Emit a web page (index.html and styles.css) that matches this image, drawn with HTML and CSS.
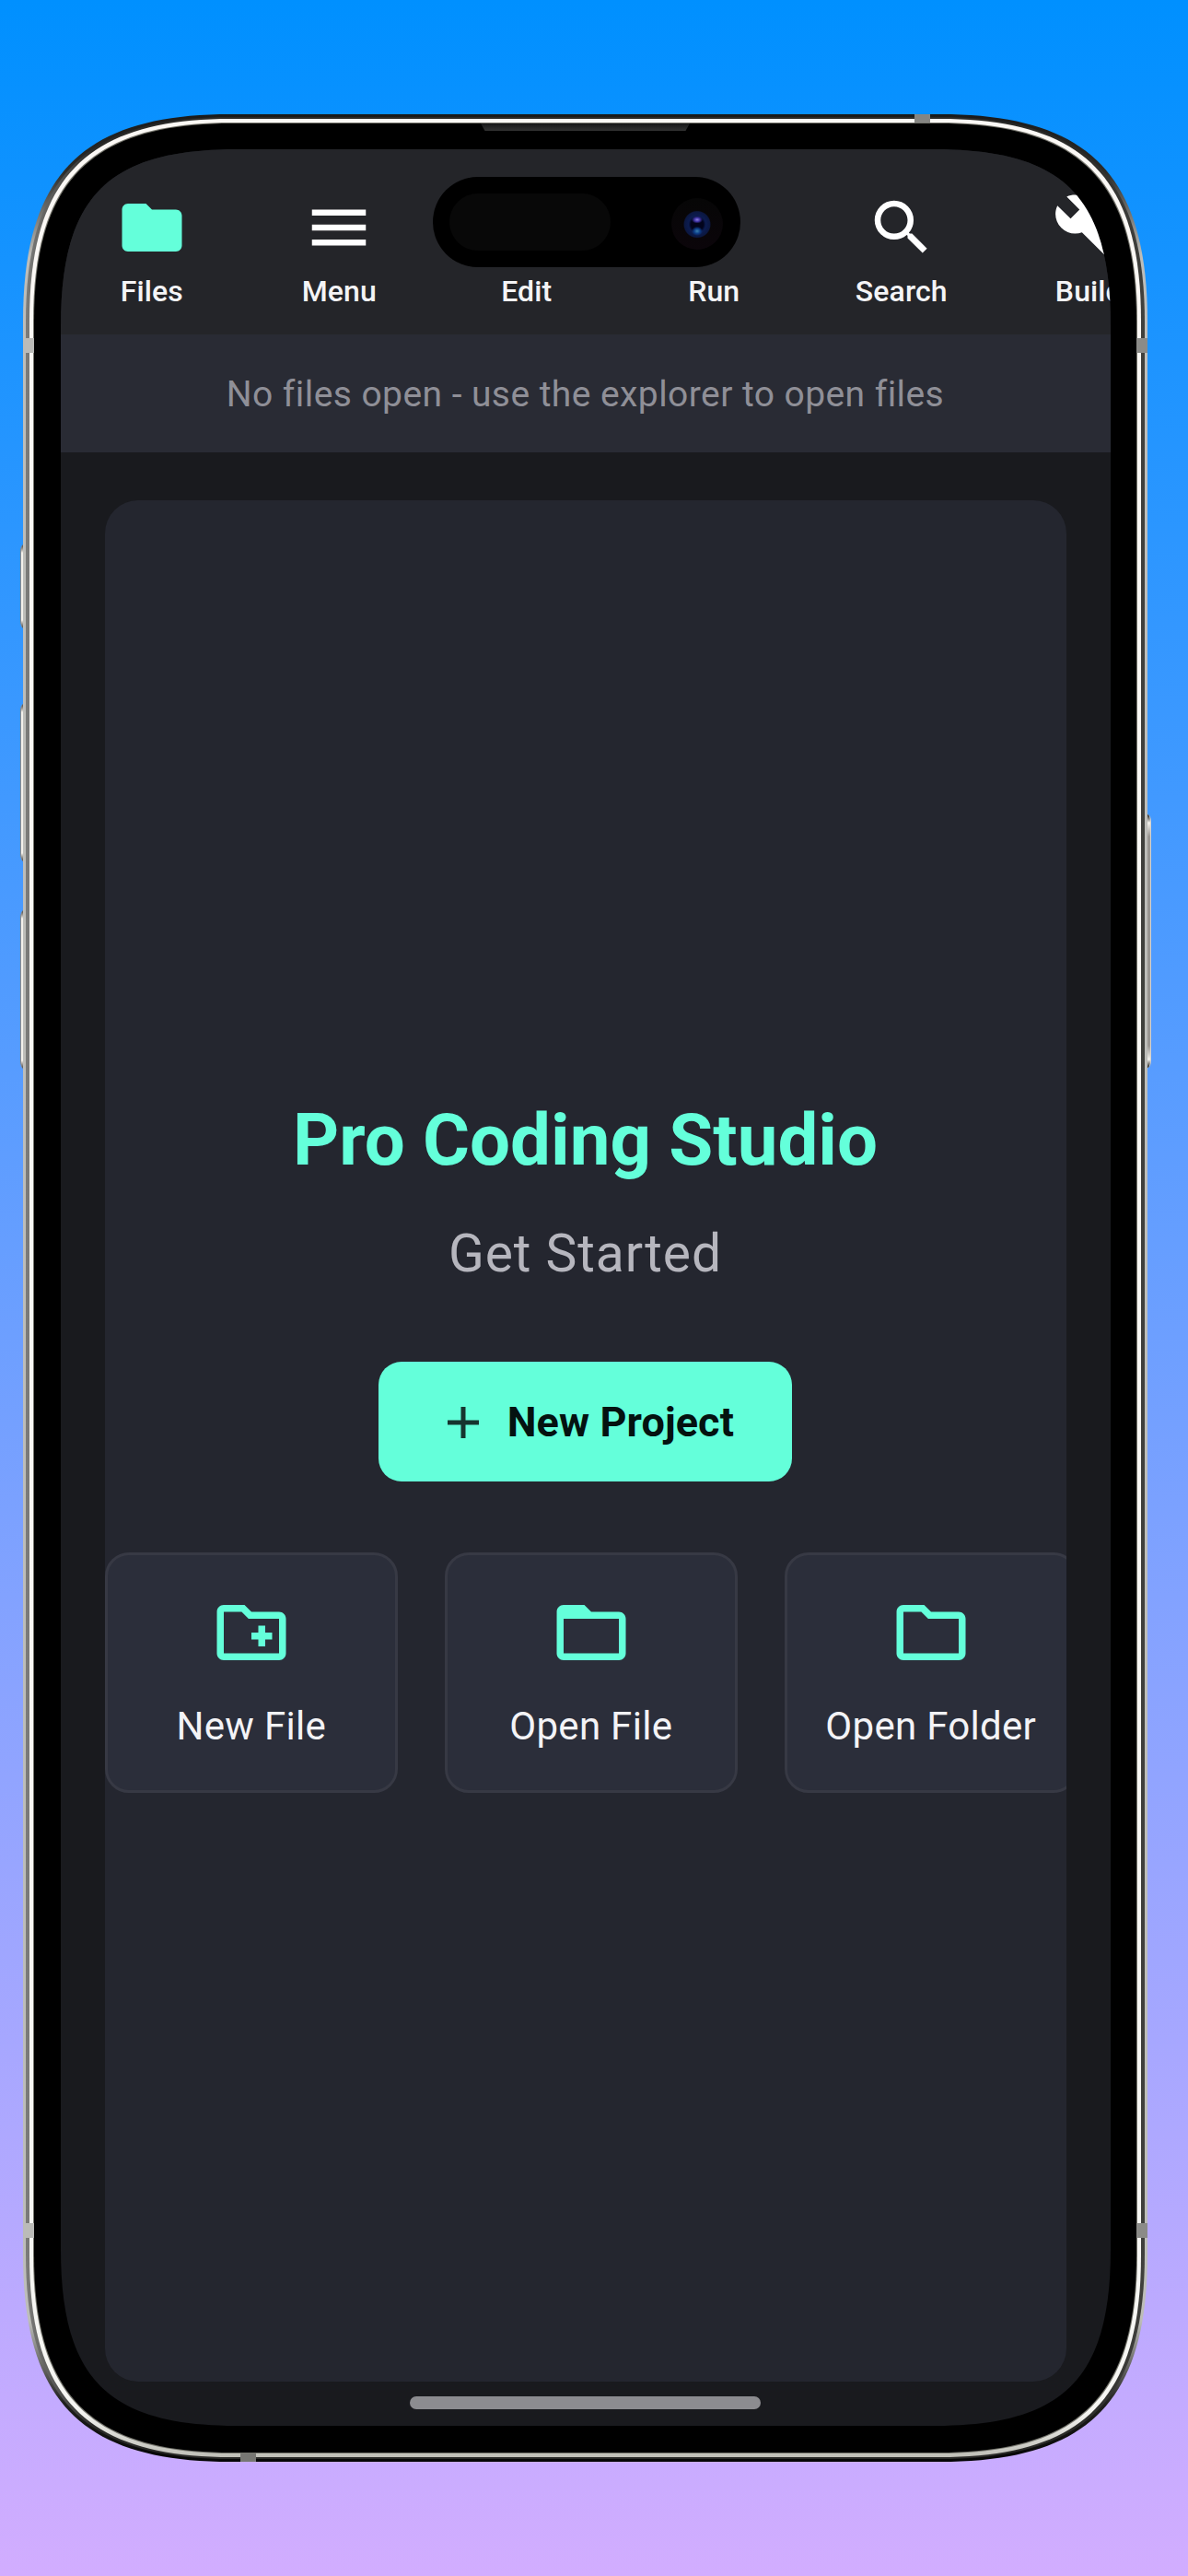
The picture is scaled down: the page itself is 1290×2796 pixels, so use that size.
FILE: index.html
```html
<!DOCTYPE html>
<html lang="en">
<head>
<meta charset="utf-8">
<title>Pro Coding Studio</title>
<link rel="stylesheet" href="styles.css">
</head>
<body>
<div class="phone">
  <span class="key key-action"></span>
  <span class="key key-up"></span>
  <span class="key key-down"></span>
  <span class="key key-power"></span>
  <svg class="frame" viewBox="0 0 1221 2548">
    <defs>
      <linearGradient id="steel" x1="0" y1="0" x2="0" y2="1">
        <stop offset="0" stop-color="#1a1a1a"/><stop offset=".025" stop-color="#2c2c2a"/><stop offset=".06" stop-color="#bdbdb9"/>
        <stop offset=".94" stop-color="#bdbdb9"/><stop offset=".975" stop-color="#20201e"/><stop offset="1" stop-color="#050505"/>
      </linearGradient>
      <linearGradient id="groove" x1="0" y1="0" x2="1" y2="0">
        <stop offset="0" stop-color="#7c7c7a"/><stop offset=".06" stop-color="#2a2a28"/>
        <stop offset=".94" stop-color="#2a2a28"/><stop offset="1" stop-color="#40403d"/>
      </linearGradient>
      <linearGradient id="shine" x1="0" y1="0" x2="0" y2="1">
        <stop offset="0" stop-color="#fbf8f5"/><stop offset=".98" stop-color="#f6f6f3"/><stop offset="1" stop-color="#bfbfb7"/>
      </linearGradient>
    </defs>
    <path fill="url(#steel)" d="M225 0H996C1156 0 1221 65 1221 225V2323C1221 2483 1156 2548 996 2548H225C65 2548 0 2483 0 2323V225C0 65 65 0 225 0Z"/>
    <path fill="url(#groove)" d="M226 3H995C1154 3 1218 67 1218 226V2322C1218 2481 1154 2545 995 2545H226C67 2545 3 2481 3 2322V226C3 67 67 3 226 3Z"/>
    <path fill="url(#shine)" d="M226 5H995C1151 5 1214 68 1214 224V2324C1214 2480 1151 2543 995 2543H226C70 2543 7 2480 7 2324V224C7 68 70 5 226 5Z"/>
    <path fill="#77776f" d="M227 9H994C1148 9 1210 71 1210 225V2323C1210 2477 1148 2539 994 2539H227C73 2539 11 2477 11 2323V225C11 71 73 9 227 9Z"/>
    <path d="M227 10H994C1147 10 1209 72 1209 225V2323C1209 2476 1147 2538 994 2538H227C74 2538 12 2476 12 2323V225C12 72 74 10 227 10Z"/>
  </svg>
  <main class="screen">
    <nav class="toolbar">
      <div class="tool tool-active"><svg class="tool-icon" viewBox="0 0 24 24"><path d="M10 4H4c-1.100 0-2 .9-2 2v12c0 1.100.9 2 2 2h16c1.100 0 2-.9 2-2V8c0-1.100-.9-2-2-2h-8l-2-2z"/></svg><span>Files</span></div>
      <div class="tool"><svg class="tool-icon" viewBox="0 0 24 24"><path d="M3 18h18v-2H3v2zm0-5h18v-2H3v2zm0-7v2h18V6H3z"/></svg><span>Menu</span></div>
      <div class="tool"><svg class="tool-icon" viewBox="0 0 24 24"><path d="M3 17.250V21h3.750L17.810 9.940l-3.750-3.750L3 17.250zM20.710 7.040a1 1 0 0 0 0-1.410l-2.340-2.340a1 1 0 0 0-1.410 0l-1.830 1.830 3.750 3.750 1.830-1.830z"/></svg><span>Edit</span></div>
      <div class="tool"><svg class="tool-icon" viewBox="0 0 24 24"><path d="M8 5v14l11-7z"/></svg><span>Run</span></div>
      <div class="tool"><svg class="tool-icon" viewBox="0 0 24 24"><path d="M15.500 14h-.79l-.28-.27A6.471 6.471 0 0 0 16 9.500 6.500 6.500 0 1 0 9.500 16c1.610 0 3.090-.59 4.230-1.570l.27.28v.79l5 4.990L20.490 19l-4.990-5zm-6 0C7.010 14 5 11.990 5 9.500S7.010 5 9.500 5 14 7.010 14 9.500 11.990 14 9.500 14z"/></svg><span>Search</span></div>
      <div class="tool"><svg class="tool-icon" viewBox="0 0 24 24"><path d="M22.700 19l-9.100-9.100c.9-2.300.4-5-1.500-6.900-2-2-5-2.400-7.400-1.300L9 6 6 9 1.600 4.700C.4 7.100.9 10.100 2.900 12.100c1.900 1.900 4.600 2.400 6.900 1.500l9.100 9.100c.4.4 1 .4 1.400 0l2.300-2.300c.5-.4.5-1.100.1-1.400z"/></svg><span>Build</span></div>
    </nav>
    <div class="tabs">No files open - use the explorer to open files</div>
    <section class="panel">
      <h1 class="title">Pro Coding Studio</h1>
      <p class="subtitle">Get Started</p>
      <button class="primary"><svg class="plus" viewBox="0 0 34 34"><path d="M17 0v34M0 17h34"/></svg><span>New Project</span></button>
      <div class="cards">
        <div class="card"><svg class="card-icon" viewBox="0 0 24 24"><path d="M20 6h-8l-2-2H4c-1.110 0-1.990.89-1.990 2L2 18c0 1.110.89 2 2 2h16c1.110 0 2-.89 2-2V8c0-1.110-.89-2-2-2zm0 12H4V6h5.170l2 2H20v10zm-8-4h2v2h2v-2h2v-2h-2v-2h-2v2h-2v2z"/></svg><span>New File</span></div>
        <div class="card"><svg class="card-icon" viewBox="0 0 24 24"><path d="M20 6h-8l-2-2H4c-1.100 0-1.990.9-1.990 2L2 18c0 1.100.9 2 2 2h16c1.100 0 2-.9 2-2V8c0-1.100-.9-2-2-2zm0 12H4V8h16v10z"/></svg><span>Open File</span></div>
        <div class="card"><svg class="card-icon" viewBox="0 0 24 24"><path d="M9.170 6l2 2H20v10H4V6h5.170M10 4H4c-1.100 0-1.990.9-1.990 2L2 18c0 1.100.9 2 2 2h16c1.100 0 2-.9 2-2V8c0-1.100-.9-2-2-2h-8l-2-2z"/></svg><span>Open Folder</span></div>
      </div>
    </section>
    <div class="home-bar"></div>
  </main>
  <span class="speaker"></span>
  <div class="island"><span class="sensor"></span><span class="camera"></span></div>
  <span class="band band-left band-high"></span>
  <span class="band band-left band-low"></span>
  <span class="band band-right band-high"></span>
  <span class="band band-right band-low"></span>
  <span class="band band-top"></span>
  <span class="band band-bottom"></span>
</div>
</body>
</html>
```
FILE: styles.css
```css
* { box-sizing: border-box; }

body {
  margin: 0;
  height: 2796px;
  padding: 124px 44px 124px 25px;
  background: linear-gradient(#0090ff, #d2adff);
  font-family: Roboto, "Liberation Sans", sans-serif;
  overflow: hidden;
}

/* Phone body */
.phone { position: relative; width: 1221px; height: 2548px; padding: 38px 40px 39px 41px; }
.frame { position: absolute; inset: 0; width: 100%; height: 100%; }

.key { position: absolute; width: 4px; background: linear-gradient(#3a332c, #f3f1ec 9px, #f3f1ec calc(100% - 9px), #3a332c); }
.key-action, .key-up, .key-down { left: -3px; border-left: 1px solid #8d8a86; border-radius: 4px 0 0 4px / 8px 0 0 8px; }
.key-action { top: 467px; height: 91px; }
.key-up { top: 640px; height: 171px; }
.key-down { top: 864px; height: 172px; }
.key-power {
  right: -4px; top: 760px; height: 275px;
  border-right: 1px solid #d5d2ce; border-radius: 0 4px 4px 0 / 0 8px 8px 0;
  background: linear-gradient(#111, #f3f1ec 9px, #9a9692 24px, #9a9692 calc(100% - 24px), #f3f1ec calc(100% - 9px), #111);
}

.band { position: absolute; }
.band-left, .band-right { width: 12px; height: 16px; }
.band-left { left: 0; background: #bbbbb8; }
.band-right { right: 0; background: #8b8b88; }
.band-high { top: 243px; }
.band-low { top: 2289px; }
.band-top { left: 968px; top: 0; width: 17px; height: 9px; background: #858582; }
.band-bottom { left: 236px; bottom: 0; width: 17px; height: 9px; background: #777773; }

.speaker {
  position: absolute; left: 497px; top: 10px; width: 227px; height: 8px;
  background: linear-gradient(#171717, #333);
  clip-path: polygon(0 0, 100% 0, 98% 100%, 2% 100%);
}
.island {
  position: absolute; left: 445px; top: 68px; width: 334px; height: 98px;
  padding: 0 19px 0 18px; border-radius: 49px; background: #000;
  display: flex; align-items: center; justify-content: space-between;
}
.sensor { width: 175px; height: 62px; border-radius: 31px; background: #080808; }
.camera {
  width: 56px; height: 56px; border-radius: 50%; margin-top: 3px;
  background:
    radial-gradient(ellipse 6px 4px at 50% 42%, #8c80e0, #4336a8 50%, transparent),
    radial-gradient(ellipse 6px 5px at 50% 64%, #397fae, #0c3c86 55%, transparent),
    radial-gradient(circle 15px at 50% 51%, #02041c 0 45%, #0c1c50 62%, #0b1740 92%, transparent),
    linear-gradient(#060606, #0b050a);
}

/* App */
.screen {
  position: relative; height: 2471px; overflow: hidden; background: #191a1e;
  clip-path: path("M192 0H948C1089 0 1140 51 1140 192V2279C1140 2420 1089 2471 948 2471H192C51 2471 0 2420 0 2279V192C0 51 51 0 192 0Z");
  display: flex; flex-direction: column; align-items: center;
}
.toolbar {
  width: 100%; height: 201px; flex: none; padding-top: 46px;
  display: flex; background: #242529; overflow: hidden;
}
.tool {
  flex: 0 0 203.500px; display: flex; flex-direction: column; align-items: center; gap: 11px;
  color: #f4f4f6; font-size: 32px; line-height: 38px; font-weight: 500; letter-spacing: .1px;
}
.tool:first-child { margin-left: -3px; }
.tool-icon { width: 78px; height: 78px; fill: #fff; }
.tool-active .tool-icon { fill: #64ffda; }
.tabs {
  width: 100%; height: 128px; flex: none; padding-right: 1px; text-align: center;
  background: #292b34; color: #8f8f97; font-size: 39px; line-height: 131px; letter-spacing: .43px;
}
.panel {
  width: 1044px; height: 2042px; flex: none; margin: 52px 1px 0 0; padding-top: 648px;
  border-radius: 36px; overflow: hidden; background: #24262f;
  display: flex; flex-direction: column; align-items: center;
}
.title { margin: 0; color: #64ffda; font-size: 78px; line-height: 94px; font-weight: 700; letter-spacing: 0; }
.subtitle { margin: 42px 0 83px; color: #b6b6be; font-size: 57px; line-height: 68px; letter-spacing: .9px; }
.primary {
  width: 449px; height: 130px; flex: none; padding: 1px 63px 0 75px; border: 0; border-radius: 25px;
  display: flex; align-items: center; justify-content: space-between;
  background: #64ffda; color: #041210; font: 700 45px/54px Roboto, sans-serif; letter-spacing: .1px;
}
.plus { width: 34px; height: 34px; fill: none; stroke: #16352f; stroke-width: 5; }
.cards { align-self: stretch; display: flex; gap: 50.500px; margin-top: 77px; }
.card {
  flex: 0 0 318.500px; height: 261px; padding-top: 39px; border: 3px solid #373944; border-radius: 26px;
  background: #2b2e3a; color: #f3f3f6; font-size: 42px; line-height: 50px; letter-spacing: .3px;
  display: flex; flex-direction: column; align-items: center; gap: 32px;
}
.card-icon { width: 90px; height: 90px; fill: #64ffda; }
.home-bar { width: 381px; height: 14px; margin: 16px 1px 0 0; border-radius: 7px; background: #8c8c90; }
```
